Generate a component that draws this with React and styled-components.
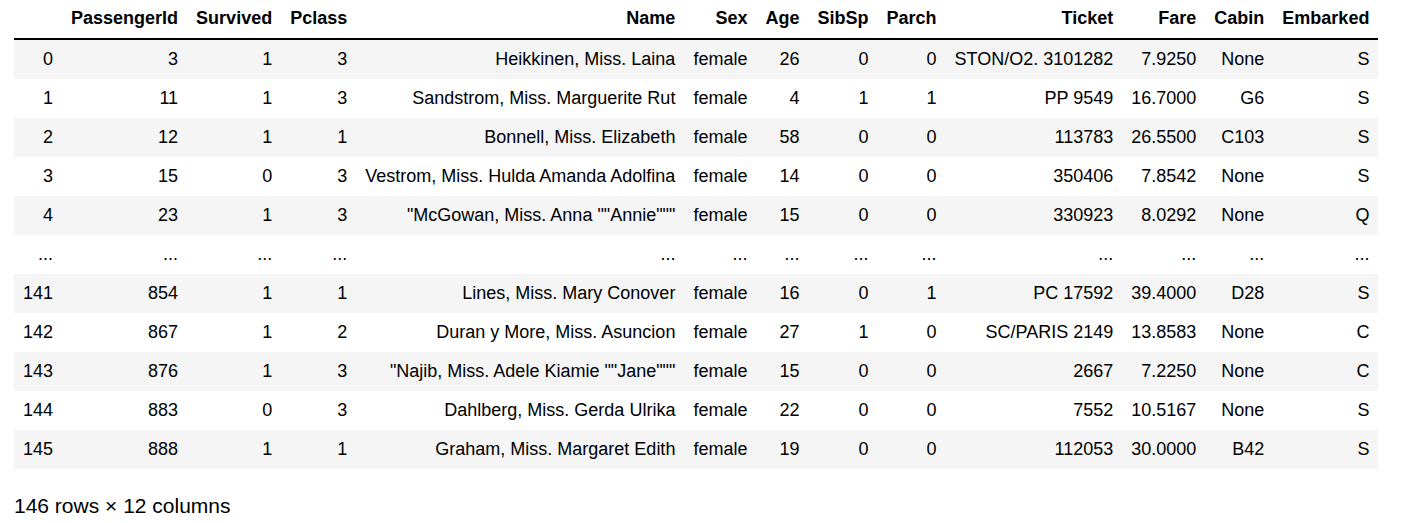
import React from 'react'
import styled, { createGlobalStyle } from 'styled-components'

const GlobalStyle = createGlobalStyle`
  body {
    margin: 0;
    background: #fff;
    font-family: "Liberation Sans", Arial, sans-serif;
    color: #000;
  }
`

const columns = ['PassengerId', 'Survived', 'Pclass', 'Name', 'Sex', 'Age', 'SibSp', 'Parch', 'Ticket', 'Fare', 'Cabin', 'Embarked']

const rows = [
  ['0', '3', '1', '3', 'Heikkinen, Miss. Laina', 'female', '26', '0', '0', 'STON/O2. 3101282', '7.9250', 'None', 'S'],
  ['1', '11', '1', '3', 'Sandstrom, Miss. Marguerite Rut', 'female', '4', '1', '1', 'PP 9549', '16.7000', 'G6', 'S'],
  ['2', '12', '1', '1', 'Bonnell, Miss. Elizabeth', 'female', '58', '0', '0', '113783', '26.5500', 'C103', 'S'],
  ['3', '15', '0', '3', 'Vestrom, Miss. Hulda Amanda Adolfina', 'female', '14', '0', '0', '350406', '7.8542', 'None', 'S'],
  ['4', '23', '1', '3', '"McGowan, Miss. Anna ""Annie"""', 'female', '15', '0', '0', '330923', '8.0292', 'None', 'Q'],
  Array(13).fill('...'),
  ['141', '854', '1', '1', 'Lines, Miss. Mary Conover', 'female', '16', '0', '1', 'PC 17592', '39.4000', 'D28', 'S'],
  ['142', '867', '1', '2', 'Duran y More, Miss. Asuncion', 'female', '27', '1', '0', 'SC/PARIS 2149', '13.8583', 'None', 'C'],
  ['143', '876', '1', '3', '"Najib, Miss. Adele Kiamie ""Jane"""', 'female', '15', '0', '0', '2667', '7.2250', 'None', 'C'],
  ['144', '883', '0', '3', 'Dahlberg, Miss. Gerda Ulrika', 'female', '22', '0', '0', '7552', '10.5167', 'None', 'S'],
  ['145', '888', '1', '1', 'Graham, Miss. Margaret Edith', 'female', '19', '0', '0', '112053', '30.0000', 'B42', 'S'],
]

const Output = styled.div`
  padding: 0 14px;
`

const Frame = styled.table`
  border-collapse: collapse;
  border-spacing: 0;
  font-size: 18px;
  line-height: 21px;
`

const HeadRow = styled.tr`
  border-bottom: 2px solid #000;
`

const HeadCell = styled.th`
  padding: 8px 9px 9px;
  text-align: right;
  font-weight: bold;
  white-space: nowrap;
`

const Row = styled.tr`
  background: ${p => (p.$striped ? '#f5f5f5' : '#fff')};
`

const Cell = styled.td`
  padding: 9px 9px;
  text-align: right;
  white-space: nowrap;
  font-weight: normal;
`

const Shape = styled.p`
  margin: 25px 0 0;
  font-size: 21px;
  line-height: 24px;
`

const App = () => {
  return (
    <>
      <GlobalStyle />
      <Output>
        <Frame>
          <thead>
            <HeadRow>
              <HeadCell />
              {columns.map(c => (
                <HeadCell key={c}>{c}</HeadCell>
              ))}
            </HeadRow>
          </thead>
          <tbody>
            {rows.map((r, i) => (
              <Row key={i} $striped={i % 2 === 0}>
                {r.map((v, j) => (
                  <Cell key={j}>{v}</Cell>
                ))}
              </Row>
            ))}
          </tbody>
        </Frame>
        <Shape>146 rows × 12 columns</Shape>
      </Output>
    </>
  )
}

export default App
